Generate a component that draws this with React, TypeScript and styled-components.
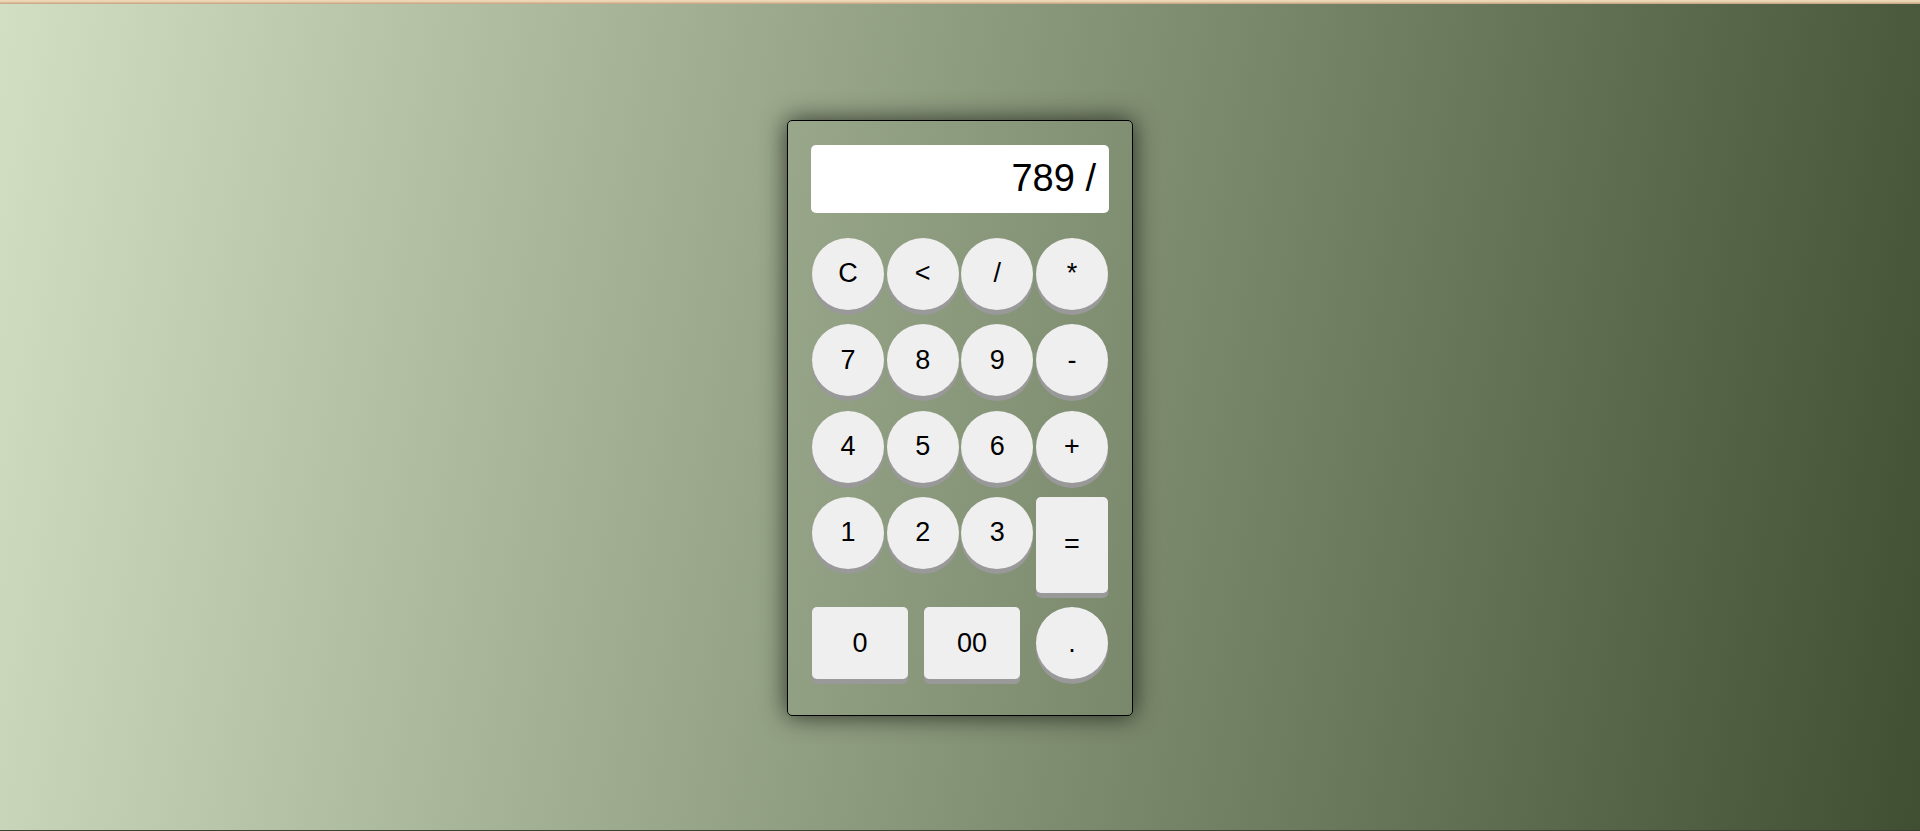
import React from "react";
import styled, { createGlobalStyle } from "styled-components";

const GlobalStyle = createGlobalStyle`
  html, body {
    margin: 0;
    padding: 0;
    height: 100%;
  }
  body {
    font-family: "Liberation Sans", Arial, sans-serif;
  }
  #root {
    height: 100%;
  }
`;

const Page = styled.div`
  display: flex;
  flex-direction: column;
  height: 831px;
  overflow: hidden;
`;

const TopStrip = styled.div`
  height: 4px;
  flex: none;
  background: linear-gradient(to bottom, #efd8b6 0, #ead1ad 2px, #c9aa8a 3px, #c9aa8a 4px);
`;

const Stage = styled.main`
  flex: 1;
  display: flex;
  align-items: center;
  justify-content: center;
  padding-top: 2px;
  background: linear-gradient(100deg, #d2dfc2 0%, #404f32 100%);
  border-bottom: 1px solid #3a4232;
`;

const Card = styled.div`
  box-sizing: content-box;
  width: 298px;
  border: 1px solid #000;
  border-radius: 5px;
  padding: 24px 23px 36px;
  box-shadow: 0 0 24px rgba(0, 0, 0, 0.7);
  display: flex;
  flex-direction: column;
  gap: 25px;
`;

const Display = styled.div`
  height: 68px;
  background: #fff;
  border-radius: 5px;
  display: flex;
  align-items: center;
  justify-content: flex-end;
  padding: 0 13px 0 15px;
  font-size: 38px;
  color: #000;
`;

const Keypad = styled.div`
  display: flex;
  flex-direction: column;
  gap: 14.4px;
  padding: 0 1px;
`;

const Row = styled.div`
  display: flex;
  justify-content: space-between;
  align-items: flex-start;
`;

const Key = styled.button<{ $shape?: "round" | "wide" | "tall" }>`
  width: ${(p) => (p.$shape === "wide" ? "96px" : "72px")};
  height: ${(p) => (p.$shape === "tall" ? "96px" : "72px")};
  border-radius: ${(p) => (!p.$shape || p.$shape === "round" ? "50%" : "5px")};
  border: none;
  padding: 0;
  background: #efefef;
  color: #000;
  font-family: "Liberation Sans", Arial, sans-serif;
  font-size: 27px;
  box-shadow: 0 5px #999;
  display: flex;
  align-items: center;
  justify-content: center;
  cursor: pointer;
`;

const rows: string[][] = [
  ["C", "<", "/", "*"],
  ["7", "8", "9", "-"],
  ["4", "5", "6", "+"],
];

export default function App() {
  return (
    <>
      <GlobalStyle />
      <Page>
        <TopStrip />
        <Stage>
          <Card>
            <Display>789 /</Display>
            <Keypad>
              {rows.map((r, i) => (
                <Row key={i}>
                  {r.map((k) => (
                    <Key key={k}>{k}</Key>
                  ))}
                </Row>
              ))}
              <Row>
                <Key>1</Key>
                <Key>2</Key>
                <Key>3</Key>
                <Key $shape="tall">=</Key>
              </Row>
              <Row>
                <Key $shape="wide">0</Key>
                <Key $shape="wide">00</Key>
                <Key>.</Key>
              </Row>
            </Keypad>
          </Card>
        </Stage>
      </Page>
    </>
  );
}
